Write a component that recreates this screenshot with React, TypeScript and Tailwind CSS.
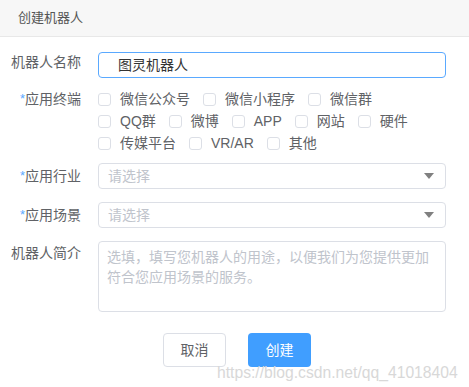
const terminals = [
  ["微信公众号", "微信小程序", "微信群"],
  ["QQ群", "微博", "APP", "网站", "硬件"],
  ["传媒平台", "VR/AR", "其他"],
];

function Label({ text, required }: { text: string; required?: boolean }) {
  return (
    <div className="w-[81px] shrink-0 text-right text-[14px] leading-[20px] text-[#606266]">
      {required && <span className="text-[#5aa9ff] text-[13px] align-top">*</span>}
      {text}
    </div>
  );
}

function Checkbox({ text }: { text: string }) {
  return (
    <label className="flex items-center mr-[13px]">
      <span className="w-[13px] h-[13px] border border-[#dcdfe6] rounded-[3px] bg-white" />
      <span className="ml-[9px] text-[14px] leading-[22px] text-[#606266]">{text}</span>
    </label>
  );
}

function Select() {
  return (
    <div className="flex-1 h-[26px] border border-[#dcdfe6] rounded-[4px] flex items-center justify-between pl-[9px] pr-[11px]">
      <span className="text-[14px] text-[#c0c4cc]">请选择</span>
      <svg width="10" height="6" viewBox="0 0 10 6">
        <path d="M0 0 L10 0 L5 6 Z" fill="#808080" />
      </svg>
    </div>
  );
}

export default function App() {
  return (
    <div
      className="relative w-[469px] h-[387px] bg-white overflow-hidden"
      style={{ fontFamily: '"Liberation Sans", "Noto Sans CJK SC", sans-serif' }}
    >
      {/* Header */}
      <div className="h-[37px] bg-[#f7f7f7] border-b border-[#e8e8e8] flex items-center pl-[18px]">
        <span className="text-[13px] text-[#555]">创建机器人</span>
      </div>

      <div className="pr-[23px] pt-[15px]">
        {/* Name */}
        <div className="flex items-start">
          <Label text="机器人名称" />
          <div className="ml-[17px] flex-1 h-[26px] border border-[#5aa9ff] rounded-[4px] flex items-center pl-[19px]">
            <span className="text-[14px] text-[#333]">图灵机器人</span>
          </div>
        </div>

        {/* Terminals */}
        <div className="flex items-start mt-[10px]">
          <div className="pt-[1px]">
            <Label text="应用终端" required />
          </div>
          <div className="ml-[17px] flex flex-col">
            {terminals.map((row, i) => (
              <div key={i} className="flex">
                {row.map((t) => (
                  <Checkbox key={t} text={t} />
                ))}
              </div>
            ))}
          </div>
        </div>

        {/* Industry */}
        <div className="flex items-center mt-[9px]">
          <Label text="应用行业" required />
          <div className="ml-[17px] flex-1 flex">
            <Select />
          </div>
        </div>

        {/* Scene */}
        <div className="flex items-center mt-[13px]">
          <Label text="应用场景" required />
          <div className="ml-[17px] flex-1 flex">
            <Select />
          </div>
        </div>

        {/* Intro */}
        <div className="flex items-start mt-[13px]">
          <div className="pt-[2px]">
            <Label text="机器人简介" />
          </div>
          <div className="ml-[17px] flex-1 h-[71px] border border-[#dcdfe6] rounded-[4px] pl-[8px] pr-[10px] pt-[5px] text-[14px] leading-[20px] text-[#c0c4cc]">
            选填，填写您机器人的用途，以便我们为您提供更加符合您应用场景的服务。
          </div>
        </div>

        {/* Buttons */}
        <div className="flex justify-center gap-[22px] mt-[21px] pl-[28px]">
          <button className="w-[63px] h-[34px] border border-[#dcdfe6] rounded-[4px] bg-white text-[14px] text-[#606266]">
            取消
          </button>
          <button className="w-[63px] h-[34px] rounded-[4px] bg-[#409eff] text-[14px] text-white">
            创建
          </button>
        </div>
      </div>

      {/* Watermark */}
      <div className="absolute left-[217px] top-[363px] text-[15.7px] leading-[20px] text-[#d8d8d8]">
        https://blog.csdn.net/qq_41018404
      </div>
    </div>
  );
}
